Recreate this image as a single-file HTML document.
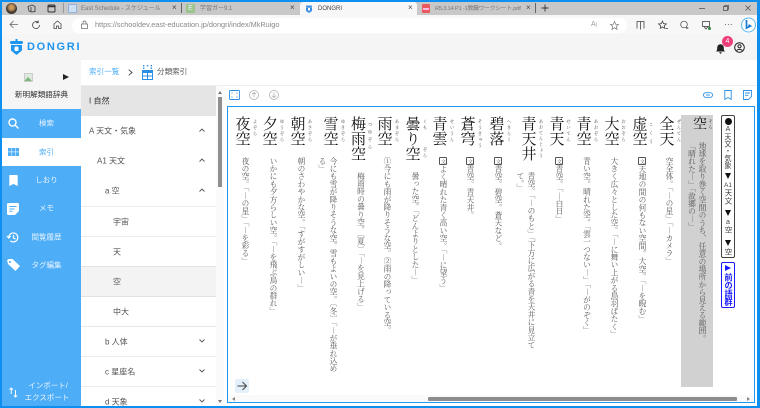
<!DOCTYPE html>
<html lang="ja"><head><meta charset="utf-8"><title>DONGRI</title>
<style>
*{box-sizing:border-box}
html,body{margin:0;padding:0;width:760px;height:408px;overflow:hidden;background:#fff}
body{position:relative;font-family:"Liberation Sans","Noto Sans CJK JP",sans-serif;font-size:8px;color:#444}
.a{position:absolute}
.t{position:absolute;white-space:nowrap;line-height:1}
svg{position:absolute;overflow:visible}
.v{position:absolute;writing-mode:vertical-rl;white-space:nowrap;font-family:"Noto Serif CJK SC","Noto Serif CJK JP",serif}
.h{font-size:15px;line-height:15px;width:15px;top:116px;color:#111}
.r{font-size:4.500px;line-height:5px;width:5px;top:119px;letter-spacing:1.500px;color:#444}
.d{font-size:7.700px;line-height:8px;width:8px;top:157px;color:#555}
.d3{top:172px}
.b{display:inline-block;border:1px solid #555;border-radius:1px;width:8px;height:8px;line-height:6px;font-size:5px;text-align:center;color:#555}
.row{position:absolute;left:81px;width:135px;border-bottom:1px solid #ececec;background:#fff}
.row span{position:absolute;top:50%;transform:translateY(-50%);font-size:8px;color:#555;white-space:nowrap}
.chev{position:absolute;left:199px}
.s{position:absolute;left:2px;width:79px;height:28px}
.s span{position:absolute;left:10px;right:0;top:50%;transform:translateY(-50%);text-align:center;color:#e8f4ff;font-size:7.500px;white-space:nowrap}
.tab{position:absolute;font-size:6px;color:#777;top:5px;white-space:nowrap;line-height:8px}
.x{position:absolute;font-size:8px;color:#444;top:4px;line-height:8px}
.rl{position:absolute;left:721px;width:14px;text-align:center;font-size:7px;line-height:8px;color:#444}
.tri{position:absolute;left:724.500px;width:0;height:0;border-top:6px solid #111;border-left:3.500px solid transparent;border-right:3.500px solid transparent}
</style></head><body>
<!-- window frame -->
<div class="a" style="left:0;top:0;width:760px;height:2px;background:#0d8ff0"></div>
<div class="a" style="left:0;top:0;width:2px;height:408px;background:#0d8ff0"></div>
<div class="a" style="left:757px;top:0;width:3px;height:408px;background:#0d8ff0"></div>
<div class="a" style="left:0;top:406px;width:760px;height:2px;background:#0d8ff0"></div>

<!-- tab strip -->
<div class="a" style="left:2px;top:2px;width:755px;height:13px;background:#c8c8c8"></div>
<div class="a" style="left:6px;top:3px;width:11px;height:11px;border-radius:50%;background:radial-gradient(circle at 50% 40%,#c9965c 0 25%,#3d352e 60%)"></div>
<svg style="left:27px;top:4px" width="9" height="9" viewBox="0 0 9 9" fill="none" stroke="#444" stroke-width=".9"><path d="M1 2.500 5 1l3 1.500v5L5 8 2 7Z M4 3v5"/></svg>
<svg style="left:47px;top:4px" width="9" height="9" viewBox="0 0 9 9" fill="none" stroke="#333" stroke-width="1"><rect x="1" y="1" width="7" height="7" rx="1"/><path d="M1 2.500h7" stroke-width="1.500"/></svg>
<div class="a" style="left:63px;top:3px;width:1px;height:10px;background:#999"></div>
<div class="a" style="left:68px;top:4px;width:9px;height:9px;background:#cfe0f4;border:1px solid #8eb2dc;border-radius:1px"></div>
<div class="tab" style="left:81px">East Schedule - スケジュール</div><div class="x" style="left:172px">×</div>
<div class="a" style="left:181px;top:3px;width:1px;height:10px;background:#666"></div>
<div class="a" style="left:186px;top:4px;width:9px;height:9px;background:#9dc48a;color:#eef;font-size:7px;line-height:9px;text-align:center">E</div>
<div class="tab" style="left:200px">学習ガー9.1</div><div class="x" style="left:290px">×</div>
<div class="a" style="left:300px;top:2px;width:117px;height:13px;background:#f7f7f7;border-radius:3px 3px 0 0"></div>
<svg style="left:305px;top:4px" width="8" height="9" viewBox="0 0 8 9"><path d="M1 3.200h6L7 7 4 9 1 7Z" fill="#3b8ee0"/><rect x="1" y="1.500" width="6" height="1.500" rx=".7" fill="#3b8ee0"/><rect x="3" y="4" width="2" height="2.500" fill="#fff"/></svg>
<div class="tab" style="left:318px;color:#444">DONGRI</div><div class="x" style="left:408px">×</div>
<div class="a" style="left:422px;top:4px;width:8px;height:9px;background:#e9595b;border-radius:1px"></div>
<div class="a" style="left:423px;top:8px;width:6px;height:2px;background:#fbd"></div>
<div class="tab" style="left:435px;letter-spacing:-.25px;font-size:5.800px">R5.3.14 P1 -1教職ワークシート.pdf</div><div class="x" style="left:526px">×</div>
<div class="a" style="left:535px;top:3px;width:1px;height:10px;background:#666"></div>
<svg style="left:541px;top:4px" width="8" height="8" fill="none" stroke="#333" stroke-width=".9"><path d="M4 .5v7M.5 4h7"/></svg>
<svg style="left:699px;top:5px" width="6" height="6" fill="none" stroke="#555" stroke-width=".8"><path d="M0 3.500h6"/></svg>
<svg style="left:723px;top:5px" width="6" height="6" fill="none" stroke="#555" stroke-width=".8"><rect x=".5" y="1.500" width="4" height="4"/><path d="M1.500 1.500V.5h4v4h-1"/></svg>
<svg style="left:745px;top:5px" width="6" height="6" fill="none" stroke="#555" stroke-width=".8"><path d="M.5.5l5 5M5.500.5l-5 5"/></svg>

<!-- address row -->
<div class="a" style="left:2px;top:15px;width:755px;height:19px;background:#f7f7f7"></div>
<div class="a" style="left:72px;top:18px;width:555px;height:15px;background:#fff;border-radius:8px"></div>
<svg style="left:9px;top:20px" width="10" height="9" viewBox="0 0 10 9" fill="none" stroke="#666" stroke-width=".8"><path d="M9 4.500H1M4.500 1 1 4.500 4.500 8"/></svg>
<svg style="left:31px;top:20px" width="10" height="10" viewBox="0 0 10 10" fill="none" stroke="#444" stroke-width=".8"><path d="M8.500 5A3.500 3.500 0 1 1 7 2.200M7.200.5v2.200H5"/></svg>
<svg style="left:53px;top:20px" width="9" height="9" viewBox="0 0 9 9" fill="none" stroke="#444" stroke-width=".8"><path d="M1 4 4.500 1 8 4v4.500H5.500V6h-2v2.500H1Z"/></svg>
<svg style="left:81px;top:21px" width="7" height="8" viewBox="0 0 7 8" fill="none" stroke="#666" stroke-width=".7"><rect x=".5" y="3" width="6" height="4.500"/><path d="M2 3V1.500a1.500 1.500 0 0 1 3 0V3"/></svg>
<div class="t" style="left:95px;top:21px;font-size:7.300px;color:#888">https://schooldev.east-education.jp/dongri/index/MkRuigo</div>
<div class="t" style="left:591px;top:21px;font-size:7px;color:#999">A<span style="font-size:5px">)</span></div>
<svg style="left:610px;top:21px" width="9" height="9" viewBox="0 0 9 9" fill="none" stroke="#777" stroke-width=".7"><path d="M4.500.5 5.700 3.300 8.500 3.500 6.300 5.400 7 8.300 4.500 6.700 2 8.300 2.700 5.400.5 3.500 3.300 3.300Z"/></svg>
<svg style="left:636px;top:20px" width="9" height="10" viewBox="0 0 9 10" fill="none" stroke="#444" stroke-width=".8"><path d="M1 3V1.500h7V3M1 1.500v7M8 1.500v7M4.500 1.500v8"/></svg>
<svg style="left:658px;top:20px" width="10" height="10" viewBox="0 0 9 9" fill="none" stroke="#444" stroke-width=".7"><path d="M4 1 5 3.300 7.500 3.500 5.600 5.200 6.200 7.500 4 6.300 2 7.500 2.400 5.200.5 3.500 3 3.300Z M7 7.500h2"/></svg>
<svg style="left:680px;top:20px" width="10" height="10" viewBox="0 0 10 10" fill="none" stroke="#444" stroke-width=".7"><circle cx="4" cy="4.500" r="3.300"/><path d="M7 7v2M6 8h2.500"/></svg>
<svg style="left:702px;top:21px" width="9" height="9" viewBox="0 0 9 9" fill="none" stroke="#444" stroke-width=".8"><rect x=".5" y=".5" width="7" height="5"/><path d="M2 5.500 4 8l2-2.500"/><circle cx="7.500" cy="7.500" r="1.500" fill="#2a8a3e" stroke="none"/></svg>
<div class="t" style="left:724px;top:21px;font-size:8px;color:#333;letter-spacing:.3px">···</div>
<svg style="left:741px;top:17px" width="15" height="17" viewBox="0 0 15 17"><circle cx="7.500" cy="8" r="7" fill="#fff" stroke="#5fb8ef" stroke-width="1"/><path d="M5.500 3v8l4-2-2-1.200" fill="none" stroke="#1a7ad4" stroke-width="1.700"/></svg>

<!-- app header -->
<div class="a" style="left:2px;top:34px;width:755px;height:26px;background:#f5f5f5"></div>
<svg style="left:10px;top:39px" width="13" height="17" viewBox="0 0 13 17"><rect x="5.500" y="0" width="2" height="2" fill="#1e96f0"/><rect x="0" y="2" width="13" height="3" rx="1.500" fill="#1e96f0"/><path d="M1 6h11v5.500L6.500 16 1 11.500Z" fill="#1e96f0"/><rect x="4.500" y="7.500" width="4" height="4.500" rx="1" fill="#fff"/></svg>
<div class="t" style="left:27px;top:42px;font-size:11px;font-weight:bold;color:#1e96f0;letter-spacing:1.700px;font-family:'Liberation Sans',sans-serif">DONGRI</div>
<svg style="left:715px;top:42px" width="11" height="12" viewBox="0 0 11 12"><path d="M1 9.500c1-1 1.200-2 1.200-4a3.300 3.300 0 0 1 6.600 0c0 2 .2 3 1.200 4Z M4 10.200h3L5.500 12Z" fill="#222"/></svg>
<div class="a" style="left:722px;top:36px;width:11px;height:11px;border-radius:50%;background:#ee3f78;color:#fff;font-size:7px;line-height:11px;text-align:center">4</div>
<svg style="left:734px;top:42px" width="11" height="11" viewBox="0 0 11 11" fill="none" stroke="#222" stroke-width="1"><circle cx="5.500" cy="5.500" r="4.800"/><circle cx="5.500" cy="4.300" r="1.600"/><path d="M2.500 8.500c1.500-1.500 4.500-1.500 6 0"/></svg>

<!-- sidebar -->
<div class="a" style="left:2px;top:60px;width:79px;height:346px;background:#4dadf7"></div>
<div class="a" style="left:2px;top:60px;width:79px;height:49px;background:#f5f5f5"></div>
<svg style="left:24px;top:73px" width="9" height="9" viewBox="0 0 9 9"><rect x=".5" y=".5" width="8" height="8" fill="#dfe8dd" stroke="#aaa" stroke-width=".5"/><path d="M.5 8 4 4l4 4Z" fill="#7cb77c"/></svg>
<div class="a" style="left:63px;top:74px;width:0;height:0;border-left:6px solid #222;border-top:3.500px solid transparent;border-bottom:3.500px solid transparent"></div>
<div class="t" style="left:2px;width:79px;top:91px;text-align:center;font-size:7.600px;color:#333">新明解類語辞典</div>

<div class="s" style="top:109px"><span>検索</span></div>
<svg style="left:8px;top:118px" width="11" height="11" viewBox="0 0 11 11" fill="none" stroke="#fff" stroke-width="1.400"><circle cx="4.500" cy="4.500" r="3.500"/><path d="M7 7l3.500 3.500"/></svg>
<div class="s" style="top:138px;height:28px;background:#fff"><span style="color:#4dadf7">索引</span></div>
<svg style="left:8px;top:148px" width="11" height="8" viewBox="0 0 11 8" fill="#4dadf7"><rect width="3.300" height="3.600"/><rect x="3.800" width="3.300" height="3.600"/><rect x="7.600" width="3.400" height="3.600"/><rect y="4.200" width="3.300" height="3.800"/><rect x="3.800" y="4.200" width="3.300" height="3.800"/><rect x="7.600" y="4.200" width="3.400" height="3.800"/></svg>
<div class="s" style="top:166px"><span>しおり</span></div>
<svg style="left:9px;top:175px" width="9" height="11" viewBox="0 0 9 11"><path d="M1 0h7a.7.7 0 0 1 .7.700V11L4.500 9 .3 11V.700A.7.7 0 0 1 1 0Z" fill="#fff"/></svg>
<div class="s" style="top:194px"><span>メモ</span></div>
<svg style="left:7px;top:203px" width="12" height="12" viewBox="0 0 12 12"><path d="M1.500 0h9A1.500 1.500 0 0 1 12 1.500V8l-4 4H1.500A1.500 1.500 0 0 1 0 10.500v-9A1.500 1.500 0 0 1 1.500 0Z" fill="#fff"/><path d="M2.500 3.500h7M2.500 6h5M2.500 8.300h3" stroke="#4dadf7" stroke-width="1"/></svg>
<div class="s" style="top:223px"><span>閲覧履歴</span></div>
<svg style="left:7px;top:232px" width="12" height="11" viewBox="0 0 12 11" fill="none" stroke="#fff" stroke-width="1.200"><path d="M1.800 5.500a4.500 4.500 0 1 1 1.500 3.300M0 4l1.800 2L3.600 4"/><path d="M6.500 3v3l2 1"/></svg>
<div class="s" style="top:251px"><span>タグ編集</span></div>
<svg style="left:7px;top:259px" width="13" height="12" viewBox="0 0 13 12"><path d="M0 1.500 1.500 0h4L13 7l-4.500 5L1 5Z" fill="#fff"/><circle cx="3" cy="3" r="1" fill="#4dadf7"/></svg>
<svg style="left:9px;top:387px" width="9" height="11" viewBox="0 0 9 11" fill="none" stroke="#fff" stroke-width="1"><path d="M2.200 7V1M.5 2.700 2.200 1l1.700 1.700M6.500 3v7M4.800 8.300 6.500 10l1.700-1.700"/></svg>
<div class="t" style="left:24px;top:382px;font-size:7.500px;color:#e8f4ff;width:48px;text-align:center">インポート/</div>
<div class="t" style="left:23px;top:394px;font-size:7.500px;color:#e8f4ff;width:48px;text-align:center">エクスポート</div>

<!-- breadcrumb -->
<div class="t" style="left:89px;top:68px;font-size:7.600px;color:#4dadf7">索引一覧</div>
<svg style="left:128px;top:69px" width="5" height="7" fill="none" stroke="#444" stroke-width=".9"><path d="M.7.700 4 3.500.7 6.300"/></svg>
<svg style="left:142px;top:65px" width="11" height="15" viewBox="0 0 11 15" fill="#2c8fe6"><rect x="1" y="0" width="1.400" height="1.400"/><rect x="4.800" y="0" width="1.400" height="1.400"/><rect x="8.600" y="0" width="1.400" height="1.400"/><rect x="1" y="2.500" width="1.400" height="1.400"/><rect x="8.600" y="2.500" width="1.400" height="1.400"/><path d="M0 5h11v10H0Z"/><path d="M1 8h4v2.500H1ZM6 8h4v2.500H6ZM1 11.500h4V14H1ZM6 11.500h4V14H6Z" fill="#fff"/></svg>
<div class="t" style="left:157px;top:68px;font-size:7.600px;color:#555">分類索引</div>
<div class="a" style="left:81px;top:85px;width:676px;height:1px;background:#eee"></div>

<!-- tree -->
<div class="row" style="top:86px;height:30px;background:#e5e5e5;border:0"><span style="left:8px;color:#333">I 自然</span></div>
<div class="row" style="top:116px;height:30px;border:0"><span style="left:8px">A 天文・気象</span></div>
<div class="row" style="top:146px;height:30px;border:0"><span style="left:16px">A1 天文</span></div>
<div class="row" style="top:176px;height:31px"><span style="left:24px">a 空</span></div>
<div class="row" style="top:207px;height:30px"><span style="left:32px">宇宙</span></div>
<div class="row" style="top:237px;height:30px;border-bottom-color:#e2e2e2"><span style="left:32px">天</span></div>
<div class="row" style="top:267px;height:30px;background:#f3f3f3;border-bottom-color:#e2e2e2"><span style="left:32px">空</span></div>
<div class="row" style="top:297px;height:30px;border-bottom-color:#e8e8e8"><span style="left:32px">中大</span></div>
<div class="row" style="top:327px;height:30px"><span style="left:24px">b 人体</span></div>
<div class="row" style="top:357px;height:30px"><span style="left:24px">c 星座名</span></div>
<div class="row" style="top:387px;height:19px;border:0"><span style="left:24px;top:15px">d 天象</span></div>
<svg class="chev" style="top:128px" width="6" height="4" fill="none" stroke="#555" stroke-width=".9"><path d="M.5 3.500 3 1l2.500 2.500"/></svg>
<svg class="chev" style="top:158px" width="6" height="4" fill="none" stroke="#555" stroke-width=".9"><path d="M.5 3.500 3 1l2.500 2.500"/></svg>
<svg class="chev" style="top:188px" width="6" height="4" fill="none" stroke="#555" stroke-width=".9"><path d="M.5 3.500 3 1l2.500 2.500"/></svg>
<svg class="chev" style="top:339px" width="6" height="4" fill="none" stroke="#555" stroke-width=".9"><path d="M.5.500 3 3 5.500.500"/></svg>
<svg class="chev" style="top:369px" width="6" height="4" fill="none" stroke="#555" stroke-width=".9"><path d="M.5.500 3 3 5.500.500"/></svg>
<svg class="chev" style="top:399px" width="6" height="4" fill="none" stroke="#555" stroke-width=".9"><path d="M.5.500 3 3 5.500.500"/></svg>
<div class="a" style="left:216px;top:86px;width:8px;height:320px;background:#fafafa"></div>
<div class="a" style="left:218px;top:97px;width:4px;height:90px;background:#8f8f8f"></div>
<div class="a" style="left:218px;top:91px;width:0;height:0;border-bottom:3px solid #777;border-left:2px solid transparent;border-right:2px solid transparent"></div>
<div class="a" style="left:218px;top:400px;width:0;height:0;border-top:3px solid #777;border-left:2px solid transparent;border-right:2px solid transparent"></div>

<!-- toolbar -->
<svg style="left:229px;top:90px" width="11" height="10" viewBox="0 0 11 10" fill="none" stroke="#2c8fe6" stroke-width=".9"><rect x=".5" y=".5" width="10" height="9" rx=".8"/><path d="M2.500 3h1M7.500 3h1M2.500 7h1M7.500 7h1" stroke-width="1"/></svg>
<svg style="left:249px;top:90px" width="10" height="10" fill="none" stroke="#aaa" stroke-width=".7"><circle cx="5" cy="5" r="4.500"/><path d="M5 7.500v-5M3 4.300 5 2.500l2 1.800"/></svg>
<svg style="left:269px;top:90px" width="10" height="10" fill="none" stroke="#aaa" stroke-width=".7"><circle cx="5" cy="5" r="4.500"/><path d="M5 2.500v5M3 5.700 5 7.500l2-1.800"/></svg>
<svg style="left:703px;top:92px" width="10" height="6" fill="none" stroke="#2c8fe6" stroke-width=".9"><rect x=".5" y=".7" width="9" height="4.600" rx="2.300"/><path d="M3 3h4"/></svg>
<svg style="left:724px;top:90px" width="8" height="10" fill="none" stroke="#2c8fe6" stroke-width=".9"><path d="M.8.500h6.400v9L4 7.500.8 9.500Z"/></svg>
<svg style="left:743px;top:90px" width="9" height="10" fill="none" stroke="#2c8fe6" stroke-width=".9"><path d="M.5.500h8v6l-3 3h-5Z"/><path d="M2 3h5M2 5.300h3.500"/></svg>

<!-- main panel -->
<div class="a" style="left:227px;top:106px;width:528px;height:297px;border:1px solid #2196f3"></div>
<div class="a" style="left:681px;top:115px;width:32px;height:272px;background:#d1d1d1"></div>

<!-- columns -->
<div class="v h" style="left:692px;font-size:14px">空</div><div class="v r" style="left:707.500px;letter-spacing:1px">そら</div>
<div class="v d" style="left:698px;top:142px">地球を取り巻く空間のうち、任意の場所から見える範囲。</div>
<div class="v d" style="left:687.500px;top:142px">「晴れた—」「故郷の—」</div>

<div class="v h" style="left:659.500px">全天</div><div class="v r" style="left:676px">ぜんてん</div>
<div class="v d" style="left:665px">空全体。「—の星」「—カメラ」</div>

<div class="v h" style="left:632.500px">虚空</div><div class="v r" style="left:648px;letter-spacing:4px;top:122px">こくう</div>
<div class="v d" style="left:638px"><span class="b">文</span>天地の間の何もない空間。大空。「—を睨む」</div>

<div class="v h" style="left:604.500px">大空</div><div class="v r" style="left:620.500px">おおぞら</div>
<div class="v d" style="left:610px">大きく広々とした空。「—に舞い上がる鳥羽ばたく」</div>

<div class="v h" style="left:576.500px">青空</div><div class="v r" style="left:593px">あおぞら</div>
<div class="v d" style="left:582.500px">青い空。晴れた空。「雲一つない—」「—がのぞく」</div>

<div class="v h" style="left:549.500px">青天</div><div class="v r" style="left:565.500px">せいてん</div>
<div class="v d" style="left:555px"><span class="b">文</span>青空。「—白日」</div>

<div class="v h" style="left:521.500px">青天井</div><div class="v r" style="left:538px;letter-spacing:1.200px">あおてんじょう</div>
<div class="v d d3" style="left:527px">青空。「—のもと」「下方に広がる青を天井に見立て</div>
<div class="v d d3" style="left:516px">て。」</div>

<div class="v h" style="left:489.500px">碧落</div><div class="v r" style="left:506px">へきらく</div>
<div class="v d" style="left:494px"><span class="b">文</span>青空。碧空。蒼天など。</div>

<div class="v h" style="left:460.500px">蒼穹</div><div class="v r" style="left:477px">そうきゅう</div>
<div class="v d" style="left:466px"><span class="b">文</span>青空。青天井。</div>

<div class="v h" style="left:432.500px">青雲</div><div class="v r" style="left:449px">せいうん</div>
<div class="v d" style="left:439px"><span class="b">文</span>よく晴れた青く高い空。「—に望う」</div>

<div class="v h" style="left:405.500px">曇り空</div><div class="v r" style="left:422px;top:119px">くも</div><div class="v r" style="left:422px;top:147px">ぞら</div>
<div class="v d d3" style="left:411px">曇った空。「どんよりとした—」</div>

<div class="v h" style="left:377.500px">雨空</div><div class="v r" style="left:394px">あまぞら</div>
<div class="v d" style="left:383px">①今にも雨が降りそうな空。②雨の降っている空。</div>

<div class="v h" style="left:351px">梅雨空</div><div class="v r" style="left:367px;letter-spacing:3px;top:122px">つゆぞら</div>
<div class="v d d3" style="left:356.500px">梅雨時の曇り空。〔夏〕「—を見上げる」</div>

<div class="v h" style="left:323.500px">雪空</div><div class="v r" style="left:340px">ゆきぞら</div>
<div class="v d" style="left:329px">今にも雪が降りそうな空。雪もよいの空。〔冬〕「—が垂れ込め</div>
<div class="v d" style="left:318px">る」</div>

<div class="v h" style="left:290.500px">朝空</div><div class="v r" style="left:307px">あさぞら</div>
<div class="v d" style="left:297px">朝のさわやかな空。「すがすがしい—」</div>

<div class="v h" style="left:262.500px">夕空</div><div class="v r" style="left:279px">ゆうぞら</div>
<div class="v d" style="left:269px">いかにも夕方らしい空。「—を飛ぶ鳥の群れ」</div>

<div class="v h" style="left:235.500px">夜空</div><div class="v r" style="left:252px">よぞら</div>
<div class="v d" style="left:241px">夜の空。「—の星」「—を彩る」</div>

<!-- right rail -->
<div class="a" style="left:721px;top:115px;width:14px;height:143px;border:1px solid #444;border-radius:2px;background:#fff"></div>
<div class="a" style="left:724.500px;top:117.500px;width:7px;height:7px;border-radius:50%;background:#111"></div>
<div class="rl" style="top:126px">A</div>
<div class="v" style="left:724px;top:133px;width:8px;line-height:8px;font-size:7.200px;color:#444;font-family:'Noto Sans CJK JP',sans-serif">天文・気象</div>
<div class="tri" style="top:173px"></div>
<div class="rl" style="top:182px;font-size:6.500px">A1</div>
<div class="v" style="left:724px;top:189px;width:8px;line-height:8px;font-size:7.500px;color:#444;letter-spacing:.6px;font-family:'Noto Sans CJK JP',sans-serif">天文</div>
<div class="tri" style="top:210px"></div>
<div class="rl" style="top:219px">a</div>
<div class="v" style="left:724px;top:226px;width:8px;line-height:8px;font-size:7.500px;color:#444;font-family:'Noto Sans CJK JP',sans-serif">空</div>
<div class="tri" style="top:240px"></div>
<div class="v" style="left:724px;top:248px;width:8px;line-height:8px;font-size:7.500px;color:#444;font-family:'Noto Sans CJK JP',sans-serif">空</div>
<div class="a" style="left:721px;top:262px;width:14px;height:46px;border:1px solid #1a1aff;border-radius:2px;background:#fff"></div>
<div class="a" style="left:725px;top:264.500px;width:0;height:0;border-left:6px solid #1a1aff;border-top:3.500px solid transparent;border-bottom:3.500px solid transparent"></div>
<div class="v" style="left:723.500px;top:273px;width:9px;line-height:9px;font-size:8.300px;font-weight:bold;color:#1a1aff;font-family:'Noto Sans CJK JP',sans-serif">前の語群</div>

<!-- bottom bar -->
<div class="a" style="left:228px;top:395px;width:526px;height:7px;background:#fafafa"></div>
<div class="a" style="left:428px;top:397px;width:309px;height:4px;background:#8d8d8d;border-radius:1px"></div>
<div class="a" style="left:232px;top:397px;width:0;height:0;border-right:3px solid #888;border-top:2px solid transparent;border-bottom:2px solid transparent"></div>
<div class="a" style="left:747px;top:397px;width:0;height:0;border-left:3px solid #888;border-top:2px solid transparent;border-bottom:2px solid transparent"></div>
<div class="a" style="left:235px;top:379px;width:14px;height:14px;background:#e3f0fb;border-radius:2px"></div>
<svg style="left:237px;top:381px" width="10" height="10" fill="none" stroke="#444" stroke-width="1"><path d="M.5 5h9M5.500 1l4 4-4 4"/></svg>
</body></html>
